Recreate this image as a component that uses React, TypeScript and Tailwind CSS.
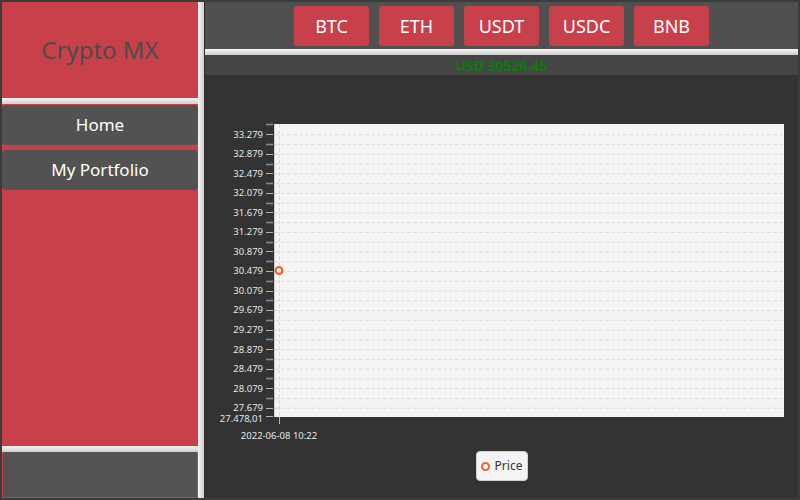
import React from "react";

const coins = ["BTC", "ETH", "USDT", "USDC", "BNB"];

const top = 134.3;
const step = 9.765;

function yFor(k: number) {
  return top + k * step;
}

function PriceChart() {
  const ticks = Array.from({ length: 29 }, (_, k) => k);
  return (
    <svg width={593} height={370} className="block">
      <g transform="translate(-205,-75)" fontFamily="'Noto Sans', 'Open Sans', sans-serif">
        <rect x={274} y={124} width={510} height={293} fill="#f4f4f4" />
        {ticks.map((k) => (
          <line
            key={"g" + k}
            x1={275}
            x2={784}
            y1={yFor(k) + 0.5}
            y2={yFor(k) + 0.5}
            stroke="#dcdcdc"
            strokeDasharray="4 2"
          />
        ))}
        <line x1={279.5} x2={279.5} y1={124} y2={417} stroke="#dcdcdc" strokeDasharray="4 2" />
        <line x1={274.5} x2={274.5} y1={124} y2={417} stroke="#cfcfcf" />
        {ticks.map((k) =>
          k % 2 === 0 ? (
            <g key={"t" + k}>
              <line x1={266} x2={273} y1={Math.round(yFor(k)) + 0.5} y2={Math.round(yFor(k)) + 0.5} stroke="#b4b4b4" />
              <text x={263} y={yFor(k) + 3.4} textAnchor="end" fontSize={9.5} fill="#e6e6e6">
                {(33.279 - (k / 2) * 0.4).toFixed(3)}
              </text>
            </g>
          ) : (
            <line
              key={"t" + k}
              x1={266}
              x2={273}
              y1={Math.round(yFor(k)) + 0.5}
              y2={Math.round(yFor(k)) + 0.5}
              stroke="#8a8a8a"
              strokeWidth={1.6}
            />
          )
        )}
        <line x1={266} x2={273} y1={124.5} y2={124.5} stroke="#8a8a8a" strokeWidth={1.6} />
        <line x1={266} x2={273} y1={416.5} y2={416.5} stroke="#b4b4b4" />
        <text x={263} y={421.5} textAnchor="end" fontSize={9.5} fill="#e6e6e6">
          27.478,01
        </text>
        <line x1={279.5} x2={279.5} y1={417} y2={424} stroke="#b4b4b4" />
        <text x={279} y={439} textAnchor="middle" fontSize={9.5} fill="#e6e6e6">
          2022-06-08 10:22
        </text>
        <circle cx={279} cy={270.5} r={3.4} fill="#ffffff" stroke="#f3622d" strokeWidth={2.2} />
      </g>
    </svg>
  );
}

export default function App() {
  return (
    <div
      className="w-[800px] h-[500px] bg-[#3c3c3c] p-0.5 flex"
      style={{ fontFamily: "'Noto Sans', 'Open Sans', sans-serif" }}
    >
      <div className="w-[196px] flex flex-col bg-[#c8404a]">
        <div className="h-[96px] flex items-center justify-center text-[24px] text-[#4c4c4c]">
          Crypto MX
        </div>
        <div className="h-[6px] bg-gradient-to-b from-[#f4f4f4] to-[#cfcfcf]" />
        <button className="mt-px h-[40px] rounded-[4px] bg-[#525252] text-white text-[17px]">Home</button>
        <button className="mt-[5px] h-[40px] rounded-[4px] bg-[#525252] text-white text-[17px]">
          My Portfolio
        </button>
        <div className="flex-1" />
        <div className="h-[6px] bg-gradient-to-b from-[#f4f4f4] to-[#cfcfcf]" />
        <div className="h-[46px] bg-[#535353] border-x border-b border-[#c8404a]" />
      </div>
      <div className="w-[6px] bg-gradient-to-r from-[#f6f6f6] to-[#cdcdcd]" />
      <div className="flex-1 flex flex-col bg-[#333333] border-l border-[#2e2e2e]">
        <div className="h-[47px] bg-[#505050] flex justify-center gap-[10px] pt-1">
          {coins.map((c) => (
            <button
              key={c}
              className="w-[75px] h-[40px] rounded-[3px] bg-[#c8404a] text-white text-[18px]"
            >
              {c}
            </button>
          ))}
        </div>
        <div className="h-[6px] bg-gradient-to-b from-[#f6f6f6] to-[#cdcdcd]" />
        <div className="h-[20px] bg-[#454545] flex items-center justify-center text-[14px] font-bold text-[#0a7d0a]">
          USD 30526.45
        </div>
        <div className="flex-1 flex flex-col items-center">
          <PriceChart />
          <div className="mt-[6px] w-[52px] h-[30px] rounded-[4px] bg-[#f4f4f4] border border-[#d0d0d0] flex items-center justify-center gap-[5px]">
            <span className="w-[9px] h-[9px] rounded-full border-2 border-[#f3622d] bg-white" />
            <span className="text-[12px] text-[#333]">Price</span>
          </div>
        </div>
      </div>
    </div>
  );
}
